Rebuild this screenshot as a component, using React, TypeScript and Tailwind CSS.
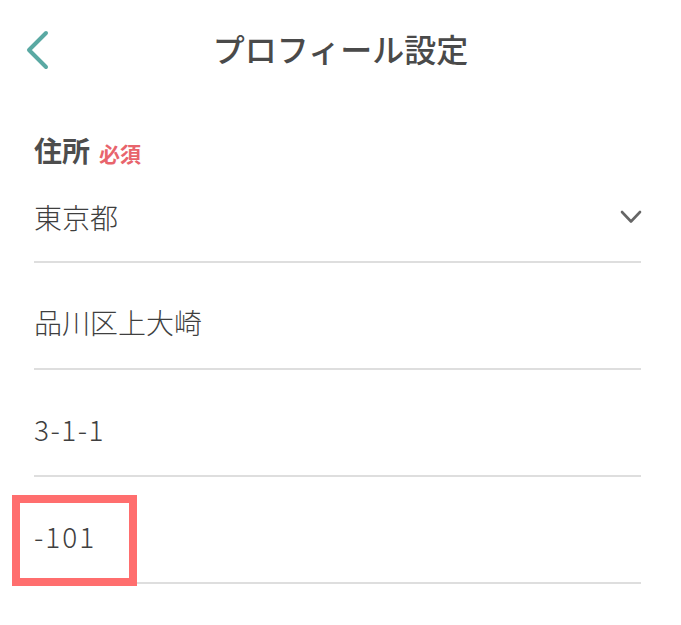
const rows = [
  { value: "品川区上大崎", latin: false },
  { value: "3-1-1", latin: true },
];

export default function App() {
  return (
    <div
      className="w-[681px] h-[625px] bg-white text-[#3f3f3f] overflow-hidden"
      style={{ fontFamily: '"Noto Sans CJK JP", "Noto Sans", sans-serif' }}
    >
      {/* Header */}
      <div className="relative h-[95px] flex items-center justify-center">
        <button className="absolute left-[24px] top-[30px] text-[#5aa9a3]">
          <svg width="28" height="40" viewBox="0 0 28 40" fill="none">
            <path d="M22 3 L5 20 L22 37" stroke="currentColor" strokeWidth="4" strokeLinecap="round" strokeLinejoin="round" />
          </svg>
        </button>
        <h1 className="text-[32px] leading-[40px] font-medium text-[#4a4a4a]">
          プロフィール設定
        </h1>
      </div>

      {/* Address form */}
      <div className="pl-[34px] pr-[40px]">
        <div className="pt-[35px] flex items-baseline gap-[9px]">
          <span className="text-[28px] leading-[40px] font-bold text-[#4d4d4d]">住所</span>
          <span className="text-[21px] leading-[40px] font-bold text-[#e8646c]">必須</span>
        </div>

        <div className="mt-[24px] pb-[24px] border-b-2 border-[#dedede] flex items-center justify-between">
          <span className="text-[28px] leading-[40px] font-light">東京都</span>
          <svg width="24" height="16" viewBox="0 0 24 16" fill="none" className="text-[#666] mr-[-2px]">
            <path d="M3 3 L12 12.5 L21 3" stroke="currentColor" strokeWidth="2.6" strokeLinecap="round" strokeLinejoin="round" />
          </svg>
        </div>

        {rows.map((row) => (
          <div key={row.value} className="pt-[39px] pb-[26px] border-b-2 border-[#dedede]">
            <span className={`text-[28px] leading-[40px] font-light ${row.latin ? "tracking-[1.5px]" : ""}`}>
              {row.value}
            </span>
          </div>
        ))}

        <div className="relative pt-[39px] pb-[26px] border-b-2 border-[#dedede]">
          <span className="text-[28px] leading-[40px] font-light tracking-[2px]">-101</span>
          <div className="absolute left-[-22px] top-[18px] w-[125px] h-[91px] border-[8px] border-[#ff6e6e]" />
        </div>
      </div>
    </div>
  );
}
